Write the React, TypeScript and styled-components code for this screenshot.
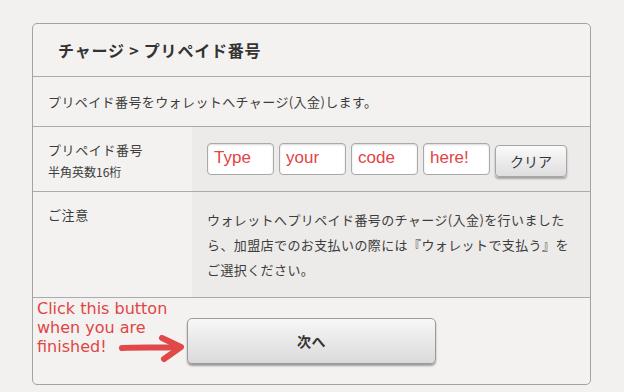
import * as React from "react";
import styled, { createGlobalStyle } from "styled-components";

const GlobalStyle = createGlobalStyle`
  html, body {
    margin: 0;
    padding: 0;
    background: #f2f1ef;
  }
  body {
    font-family: "Noto Sans CJK JP", "Noto Sans", sans-serif;
    color: #3c3c3c;
  }
`;

const Page = styled.div`
  padding: 23px 0 0 32px;
  width: 624px;
  height: 392px;
  box-sizing: border-box;
`;

const Panel = styled.div`
  width: 559px;
  box-sizing: border-box;
  border: 1px solid #a3a3a3;
  border-radius: 5px;
  background: #f3f2f0;
`;

const Header = styled.div`
  height: 52px;
  display: flex;
  align-items: center;
  padding-left: 25px;
  border-bottom: 1px solid #ababab;
`;

const Title = styled.h2`
  margin: 0;
  font-size: 16px;
  font-weight: 700;
  letter-spacing: 0.8px;
  color: #333;
`;

const Lead = styled.div`
  height: 49px;
  display: flex;
  align-items: center;
  padding-left: 15px;
  font-size: 13px;
  letter-spacing: 0.4px;
  border-bottom: 1px solid #ababab;
`;

const Row = styled.div`
  display: flex;
  border-bottom: 1px solid #ababab;
`;

const Label = styled.div`
  width: 159px;
  flex: none;
  box-sizing: border-box;
  padding: 13px 15px 0;
  font-size: 13px;
  line-height: 20px;
  letter-spacing: 0.6px;
`;

const Note = styled.div`
  font-size: 12px;
  line-height: 16px;
  margin-top: 4px;
  letter-spacing: 0;
`;

const Cell = styled.div<{ $pad: string }>`
  flex: 1;
  background: #ecebe9;
  padding: ${(p) => p.$pad};
  font-size: 13px;
  line-height: 25px;
  letter-spacing: 0.4px;
`;

const Inputs = styled.div`
  display: flex;
  gap: 5px;
  align-items: flex-start;
`;

const CodeBox = styled.div`
  width: 67px;
  height: 32px;
  box-sizing: border-box;
  border: 1px solid #a9a9a9;
  border-radius: 4px;
  background: #fff;
  box-shadow: inset 0 1px 2px rgba(0, 0, 0, 0.15);
  padding: 3px 0 0 6px;
  font-family: "Liberation Sans", Arial, sans-serif;
  font-size: 17px;
  line-height: 22px;
  letter-spacing: 0;
  color: #e04545;
`;

const ClearButton = styled.button`
  width: 72px;
  height: 32px;
  margin-top: 2px;
  border: 1px solid #a6a6a6;
  border-radius: 4px;
  background: linear-gradient(#fafafa, #dedede);
  box-shadow: 0 2px 2px rgba(0, 0, 0, 0.3);
  font-family: "Noto Sans CJK JP", sans-serif;
  font-size: 14px;
  letter-spacing: 0;
  color: #333;
  padding: 0;
`;

const Footer = styled.div`
  position: relative;
  height: 86px;
  display: flex;
  justify-content: center;
  align-items: flex-start;
  padding-top: 20px;
  box-sizing: border-box;
`;

const NextButton = styled.button`
  width: 249px;
  height: 46px;
  border: 1px solid #9a9a9a;
  border-radius: 5px;
  background: linear-gradient(#f7f7f7, #dadada);
  box-shadow: 0 2px 2px rgba(0, 0, 0, 0.35);
  font-family: "Noto Sans CJK JP", sans-serif;
  font-size: 14px;
  font-weight: 700;
  letter-spacing: 0.5px;
  color: #333;
  padding: 0;
`;

const Hint = styled.div`
  position: absolute;
  left: 4px;
  top: 1px;
  font-family: "DejaVu Sans", Verdana, sans-serif;
  font-size: 16px;
  line-height: 19px;
  color: #e04545;
`;

const Arrow = styled.svg`
  position: absolute;
  left: 86px;
  top: 37px;
`;

export default function App() {
  return (
    <>
      <GlobalStyle />
      <Page>
        <Panel>
          <Header>
            <Title>チャージ &gt; プリペイド番号</Title>
          </Header>
          <Lead>プリペイド番号をウォレットへチャージ(入金)します。</Lead>
          <Row>
            <Label>
              プリペイド番号
              <Note>半角英数16桁</Note>
            </Label>
            <Cell $pad="16px 15px 14px">
              <Inputs>
                <CodeBox>Type</CodeBox>
                <CodeBox>your</CodeBox>
                <CodeBox>code</CodeBox>
                <CodeBox>here!</CodeBox>
                <ClearButton>クリア</ClearButton>
              </Inputs>
            </Cell>
          </Row>
          <Row>
            <Label>ご注意</Label>
            <Cell $pad="15px 5px 15px 15px">
              ウォレットへプリペイド番号のチャージ(入金)を行いました
              <br />
              ら、加盟店でのお支払いの際には『ウォレットで支払う』を
              <br />
              ご選択ください。
            </Cell>
          </Row>
          <Footer>
            <Hint>
              Click this button
              <br />
              when you are
              <br />
              finished!
            </Hint>
            <Arrow width="66" height="28" viewBox="0 0 66 28">
              <path
                d="M3 13 C 20 12, 40 13, 60 12"
                stroke="#e0484a"
                strokeWidth="6"
                strokeLinecap="round"
                fill="none"
              />
              <path
                d="M43 3 L 62 12 L 45 24"
                stroke="#e0484a"
                strokeWidth="6"
                strokeLinecap="round"
                strokeLinejoin="round"
                fill="none"
              />
            </Arrow>
            <NextButton>次へ</NextButton>
          </Footer>
        </Panel>
      </Page>
    </>
  );
}
